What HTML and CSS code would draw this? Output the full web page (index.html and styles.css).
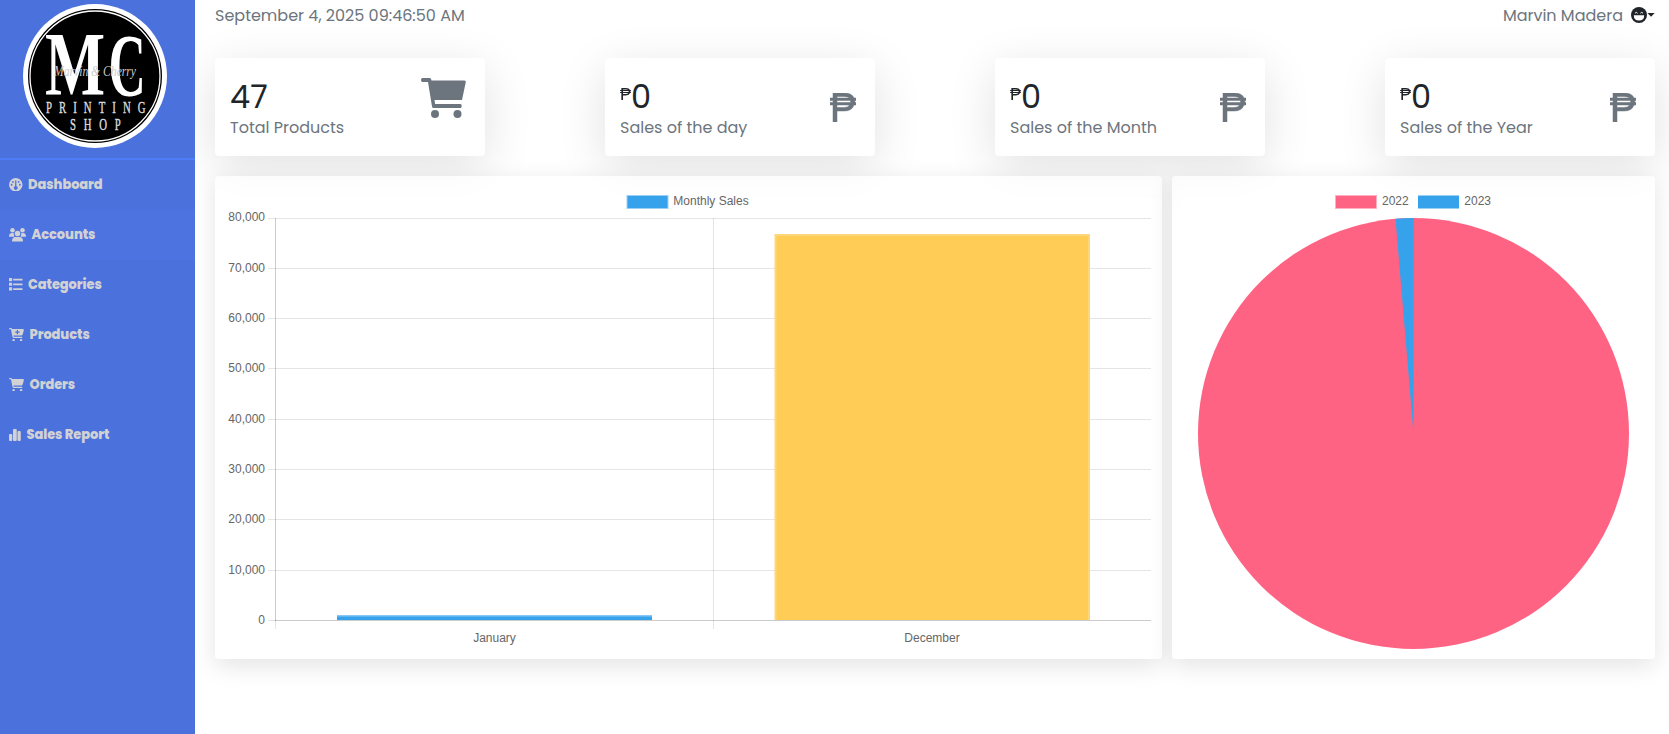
FILE: index.html
```html
<!DOCTYPE html>
<html lang="en">
<head>
<meta charset="utf-8">
<title>Dashboard</title>
<link rel="stylesheet" href="styles.css">
</head>
<body>
<svg class="defs" width="0" height="0">
  <symbol id="cart" viewBox="0 0 576 512"><path d="M0 24C0 10.700 10.700 0 24 0H69.500c22 0 41.500 12.800 50.600 32h411c26.300 0 45.500 25 38.600 50.400l-41 152.300c-8.500 31.400-37 53.300-69.500 53.300H170.700l5.400 28.500c2.200 11.300 12.100 19.500 23.600 19.500H488c13.300 0 24 10.700 24 24s-10.700 24-24 24H199.700c-34.600 0-64.300-24.600-70.700-58.500L77.400 54.500c-.7-3.800-4-6.500-7.900-6.500H24C10.700 48 0 37.300 0 24zM128 464a48 48 0 1 1 96 0 48 48 0 1 1-96 0zm336-48a48 48 0 1 1 0 96 48 48 0 1 1 0-96z"/></symbol>
  <symbol id="cart4" viewBox="0 0 45 40"><path d="M1.500 0H9q1.200 0 1.400 2.500H43.500q1.500 0 1.300 1.500L41 22H13.500l.6 4H39.500q1.200 0 1.200 1.900T39.500 30H12.500q-1.200 0-1.500-1.500L7 4H1.500Q0 4 0 2T1.500 0z"/><circle cx="14" cy="36" r="4"/><circle cx="36.500" cy="36" r="4"/></symbol>
  <symbol id="peso" viewBox="0 0 26 29"><path fill-rule="evenodd" d="M3 0H14Q22 0 24 5H26V7.500H24.800V9.500H26V12H24Q22 18 14 18H7V29H3V12H0V9.500H3V7.500H0V5H3zM7 3.500V5H19.500Q18 3.500 14 3.500zM7 7.500V9.500H20.500V7.500zM7 12V14.500H14Q18 14.500 19.500 12z"/></symbol>
</svg>
<div class="app">
  <aside class="sidebar">
    <div class="brand">
      <svg width="144" height="144" viewBox="23 4 144 144">
        <circle cx="95" cy="76" r="72" fill="#fff"/>
        <circle cx="95" cy="76" r="67" fill="#000"/>
        <circle cx="95" cy="76" r="65" fill="none" stroke="#fff" stroke-width="1.300"/>
        <g class="monogram" fill="#fff">
          <text class="bold" transform="translate(45 95) scale(.7 1)" font-size="91">M</text>
          <text class="bold" transform="translate(108.500 94.500) scale(.58 1)" font-size="89">C</text>
          <text class="small" transform="translate(46 113) scale(.65 1)" font-size="16.500" textLength="153">PRINTING</text>
          <text class="small" transform="translate(70 130) scale(.65 1)" font-size="16.500" textLength="78">SHOP</text>
        </g>
        <text class="script" x="54" y="76" font-size="15" textLength="82" lengthAdjust="spacingAndGlyphs">Marvin &amp; Cherry</text>
      </svg>
    </div>
    <nav>
      <a class="item"><svg width="13.500" height="13.500" viewBox="0 0 26 26"><circle cx="13" cy="13" r="13"/><path class="cut" d="M11.800 5h2.400v11a3.500 3.500 0 1 1-2.400 0z"/><g class="cut"><circle cx="7.500" cy="7.500" r="1.700"/><circle cx="18.500" cy="7.500" r="1.700"/><circle cx="5" cy="13" r="1.700"/><circle cx="21" cy="13" r="1.700"/></g></svg><span>Dashboard</span></a>
      <a class="item active"><svg width="17" height="14" viewBox="0 0 34 28"><circle cx="7" cy="4.500" r="4.500"/><circle cx="27" cy="4.500" r="4.500"/><circle cx="17" cy="11" r="5.500"/><path d="M0 17.500q0-7.500 6-7.500 3 0 4 1-1 3 1 6.500zM34 17.500q0-7.500-6-7.500-3 0-4 1 1 3-1 6.500zM6 27q0-9 7-9h8q7 0 7 9z"/></svg><span>Accounts</span></a>
      <a class="item"><svg width="13.500" height="12.500" viewBox="0 0 26 24"><path d="M0 0h6v6H0zM0 9h6v6H0zM0 18h6v6H0zM8 1.500h18v3.400H8zM8 10.500h18v3.400H8zM8 19.500h18v3.400H8z"/></svg><span>Categories</span></a>
      <a class="item"><svg width="15" height="13.500"><use href="#cart"/><path class="cut" d="M7.800 2h1.200v1.600h1.600v1.100H9v1.600H7.800V4.700H6.200V3.600h1.600z"/></svg><span>Products</span></a>
      <a class="item"><svg width="15" height="13.500"><use href="#cart"/></svg><span>Orders</span></a>
      <a class="item"><svg width="12" height="12" viewBox="0 0 24 24"><rect y="10" width="6.500" height="14" rx="2"/><rect x="8" width="7.500" height="24" rx="2"/><rect x="17" y="4" width="6.500" height="20" rx="2"/></svg><span>Sales Report</span></a>
    </nav>
  </aside>
  <main class="main">
    <header class="topbar">
      <span class="date">September 4, 2025 09:46:50 AM</span>
      <span class="user"><span class="name">Marvin Madera</span>
        <svg width="24" height="16" viewBox="0 0 24 16"><circle cx="8" cy="8" r="8" fill="#212529"/><path fill="#fff" d="M2.800 8.200h10.400q0 5.300-5.200 5.300t-5.200-5.300z"/><path d="M4 6.300q1.300-2 2.600 0M9.400 6.300q1.300-2 2.600 0" fill="none" stroke="#fff" stroke-width="1"/><path fill="#212529" d="M16.500 6h7.200L20 9.800z"/></svg>
      </span>
    </header>
    <section class="cards">
      <div class="card"><div><div class="value">47</div><div class="label">Total Products</div></div><svg class="cart" width="45" height="40"><use href="#cart4"/></svg></div>
      <div class="card"><div><div class="value"><svg width="11" height="12"><use href="#peso"/></svg>0</div><div class="label">Sales of the day</div></div><svg class="peso" width="26" height="29"><use href="#peso"/></svg></div>
      <div class="card"><div><div class="value"><svg width="11" height="12"><use href="#peso"/></svg>0</div><div class="label">Sales of the Month</div></div><svg class="peso" width="26" height="29"><use href="#peso"/></svg></div>
      <div class="card"><div><div class="value"><svg width="11" height="12"><use href="#peso"/></svg>0</div><div class="label">Sales of the Year</div></div><svg class="peso" width="26" height="29"><use href="#peso"/></svg></div>
    </section>
    <section class="charts">
      <div class="panel">
        <svg width="947" height="483" viewBox="215 176 947 483">
          <rect x="626.500" y="195" width="42" height="14" fill="#9bd0f5"/><rect x="627.500" y="196" width="40" height="12" fill="#36a2eb"/>
          <text x="673.300" y="205">Monthly Sales</text>
          <path class="grid" d="M268 218.500H1151M268 268.500H1151M268 318.500H1151M268 368.500H1151M268 419.500H1151M268 469.500H1151M268 519.500H1151M268 570.500H1151M268 620.500H275M713.500 218V629M275.500 620V629"/>
          <path class="axis" d="M275.500 218V621M275 620.500H1151"/>
          <g class="ticks"><text x="265" y="221">80,000</text><text x="265" y="272">70,000</text><text x="265" y="322">60,000</text><text x="265" y="372">50,000</text><text x="265" y="423">40,000</text><text x="265" y="473">30,000</text><text x="265" y="523">20,000</text><text x="265" y="574">10,000</text><text x="265" y="624">0</text></g>
          <g class="months"><text x="494.500" y="642">January</text><text x="932" y="642">December</text></g>
          <rect x="337" y="615" width="315" height="5" fill="#36a2eb"/><rect x="337" y="615" width="315" height="1.500" fill="#86c7f3"/>
          <rect x="774.500" y="234" width="315.500" height="386" fill="#ffd778"/><rect x="776.500" y="236" width="311.500" height="384" fill="#ffcd56"/>
        </svg>
      </div>
      <div class="panel">
        <svg width="483" height="483" viewBox="1172 176 483 483">
          <rect x="1335" y="195" width="42" height="14" fill="#ffb1c1"/><rect x="1336" y="196" width="40" height="12" fill="#ff6384"/>
          <text x="1382" y="205">2022</text>
          <rect x="1418" y="195" width="41" height="14" fill="#9bd0f5"/><rect x="1418" y="196" width="41" height="12" fill="#36a2eb"/>
          <text x="1464.300" y="205">2023</text>
          <circle cx="1413.500" cy="433.500" r="215.500" fill="#ff6384"/>
          <path d="M1413.500 433.500L1395.500 218.750A215.500 215.500 0 0 1 1413.800 218z" fill="#36a2eb"/>
        </svg>
      </div>
    </section>
  </main>
</div>
</body>
</html>
```
FILE: styles.css
```css
* { box-sizing: border-box; }
body { margin: 0; background: #fff; font-family: Poppins, Inter, sans-serif; font-size: 16px; color: #212529; overflow: hidden; }
.defs { position: absolute; }
svg { display: block; flex: none; }
.app { display: flex; height: 734px; }
.sidebar { width: 195px; flex: none; background: #4b71dd; position: relative; z-index: 1; }
.brand { height: 160px; padding: 4px 0 0 23px; border-bottom: 2px solid #4e7cf8; }
.monogram { font-family: "Liberation Serif", serif; }
.bold { font-weight: 700; }
.small { fill: #ddd; stroke: #ddd; stroke-width: .4px; }
.script { font-family: "Liberation Serif", serif; font-style: italic; fill: #ccc; }
.item { height: 50px; display: flex; align-items: center; gap: 5.5px; padding: 0 0 1px 9px; color: #d2d2d4; fill: #d2d2d4; font-size: 13px; font-weight: 800; letter-spacing: -.08px; }
.item.active { background: #4d73e0; }
.cut { fill: #4b71dd; }
.main { flex: 1; padding: 0 14px 0 20px; }
.topbar { height: 58px; display: flex; justify-content: space-between; color: #6c757d; line-height: 24px; padding-top: 4px; }
.user { display: flex; gap: 8px; height: 24px; align-items: center; }
.user svg { margin-top: -2px; }
.cards { display: flex; justify-content: space-between; }
.card { width: 270px; height: 98px; padding: 20px 19px 0 15px; background: #fff; border-radius: 4px; box-shadow: 0 .7rem 3rem rgba(0,0,0,.12); display: flex; justify-content: space-between; }
.value { font-size: 32px; line-height: 38px; height: 38px; display: flex; font-weight: 400; }
.value svg { margin-top: 10px; fill: #212529; }
.label { color: #6c757d; line-height: 24px; }
.cart, .peso { fill: #6c757d; }
.peso { margin-top: 15px; stroke: #6c757d; stroke-width: .5px; overflow: visible; }
.charts { display: flex; gap: 10px; margin-top: 20px; }
.panel { height: 483px; border-radius: 4px; background: rgba(255,255,255,.7); box-shadow: 0 .4rem 1.5rem rgba(0,0,0,.11); }
.panel text { font-family: "Liberation Sans", Arial, sans-serif; font-size: 12px; fill: #666; }
.grid { stroke: rgba(0,0,0,.1); fill: none; }
.axis { stroke: rgba(0,0,0,.2); fill: none; }
.ticks { text-anchor: end; }
.months { text-anchor: middle; }
```
